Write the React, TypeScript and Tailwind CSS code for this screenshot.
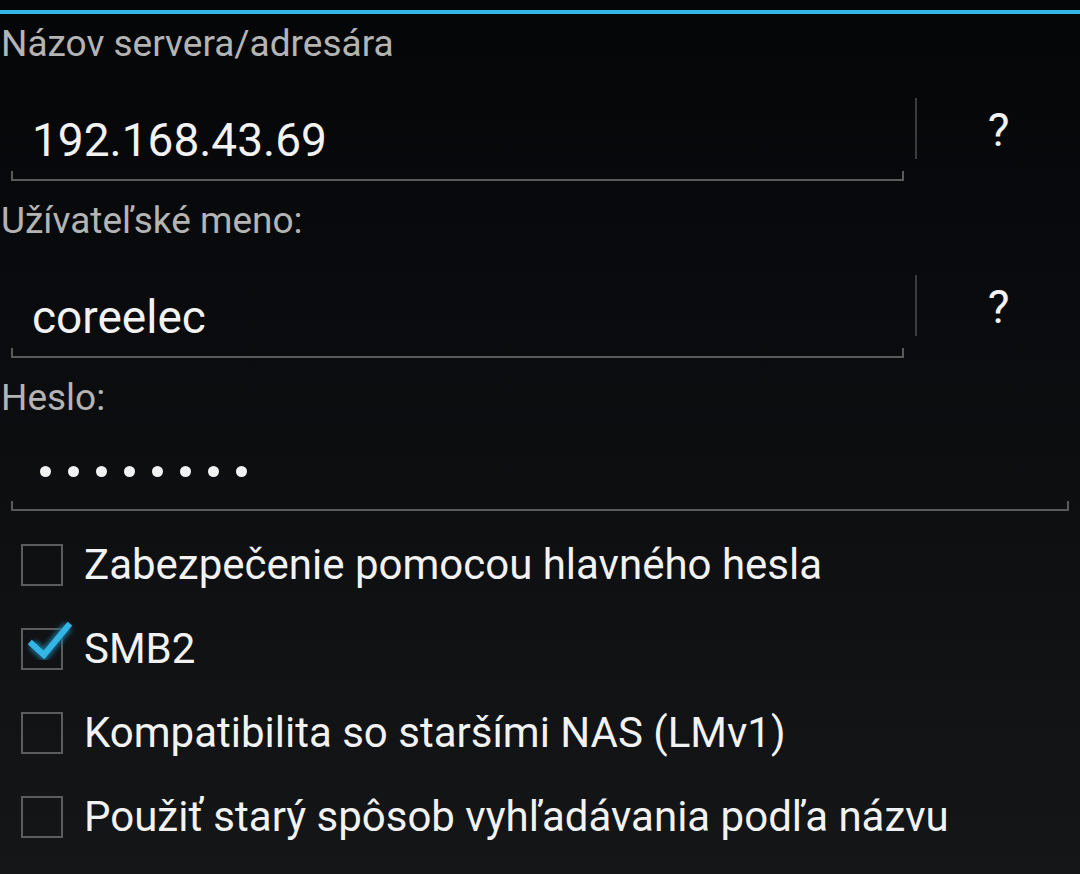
import React from "react";

const Bracket = () => (
    <div className="h-[10px] w-full border-x-2 border-b-2 border-[#5a5a5a]" />
);

const Field = ({value}: {value: string}) => (
    <div className="flex h-[119px] items-start">
        <div className="ml-[11px] flex w-[893px] flex-col">
            <div className="mt-[45px] pl-[21px] text-[46px] leading-none text-[#f2f2f2]">{value}</div>
            <div className="mt-[8px]">
                <Bracket />
            </div>
        </div>
        <div className="mt-[26px] ml-[11px] h-[61px] w-[2px] bg-[#3c3c3c]" />
        <div className="mt-[35px] flex-1 text-center text-[46px] leading-none text-[#f2f2f2]">?</div>
    </div>
);

const Label = ({children}: {children: React.ReactNode}) => (
    <div className="flex h-[58px] items-center pl-[1px] text-[37px] leading-none text-[#b4b4b4]">{children}</div>
);

const Checkbox = ({label, checked}: {label: string, checked?: boolean}) => (
    <div className="flex h-[84px] items-center">
        <div className="relative ml-[21px] h-[42px] w-[42px] border-2 border-[#5c5c5c]">
            {checked && (
                <svg className="absolute left-[2px] -top-[18px] h-[48px] w-[52px]" viewBox="0 0 52 48">
                    <defs>
                        <filter id="glow" x="-30%" y="-30%" width="160%" height="160%">
                            <feGaussianBlur stdDeviation="2.5" />
                        </filter>
                    </defs>
                    <polyline points="7,32 19,43 43,14" fill="none" stroke="#1d6f93" strokeWidth="10" filter="url(#glow)" />
                    <polyline points="7,32 19,43 43,14" fill="none" stroke="#33b5e5" strokeWidth="6" strokeLinecap="square" />
                </svg>
            )}
        </div>
        <div className="ml-[21px] text-[42px] leading-none text-[#f2f2f2]">{label}</div>
    </div>
);

export default function App() {
    return (
        <div className="h-[874px] w-[1080px] overflow-hidden bg-gradient-to-b from-[#050608] to-[#141618] font-['Roboto',sans-serif]">
            <div className="pt-[10px]">
                <div className="h-[4px] bg-[#33b5e5]" />
            </div>
            <Label>Názov servera/adresára</Label>
            <Field value="192.168.43.69" />
            <Label>Užívateľské meno:</Label>
            <Field value="coreelec" />
            <Label>Heslo:</Label>
            <div className="ml-[11px] flex w-[1058px] flex-col">
                <div className="mt-[40px] flex gap-[17px] pl-[29px]">
                    {Array.from({length: 8}).map((_, i) => (
                        <div key={i} className="h-[11px] w-[11px] rounded-full bg-[#f2f2f2]" />
                    ))}
                </div>
                <div className="mt-[24px]">
                    <Bracket />
                </div>
            </div>
            <div className="mt-[12px]">
                <Checkbox label="Zabezpečenie pomocou hlavného hesla" />
                <Checkbox label="SMB2" checked />
                <Checkbox label="Kompatibilita so staršími NAS (LMv1)" />
                <Checkbox label="Použiť starý spôsob vyhľadávania podľa názvu" />
            </div>
        </div>
    );
}
